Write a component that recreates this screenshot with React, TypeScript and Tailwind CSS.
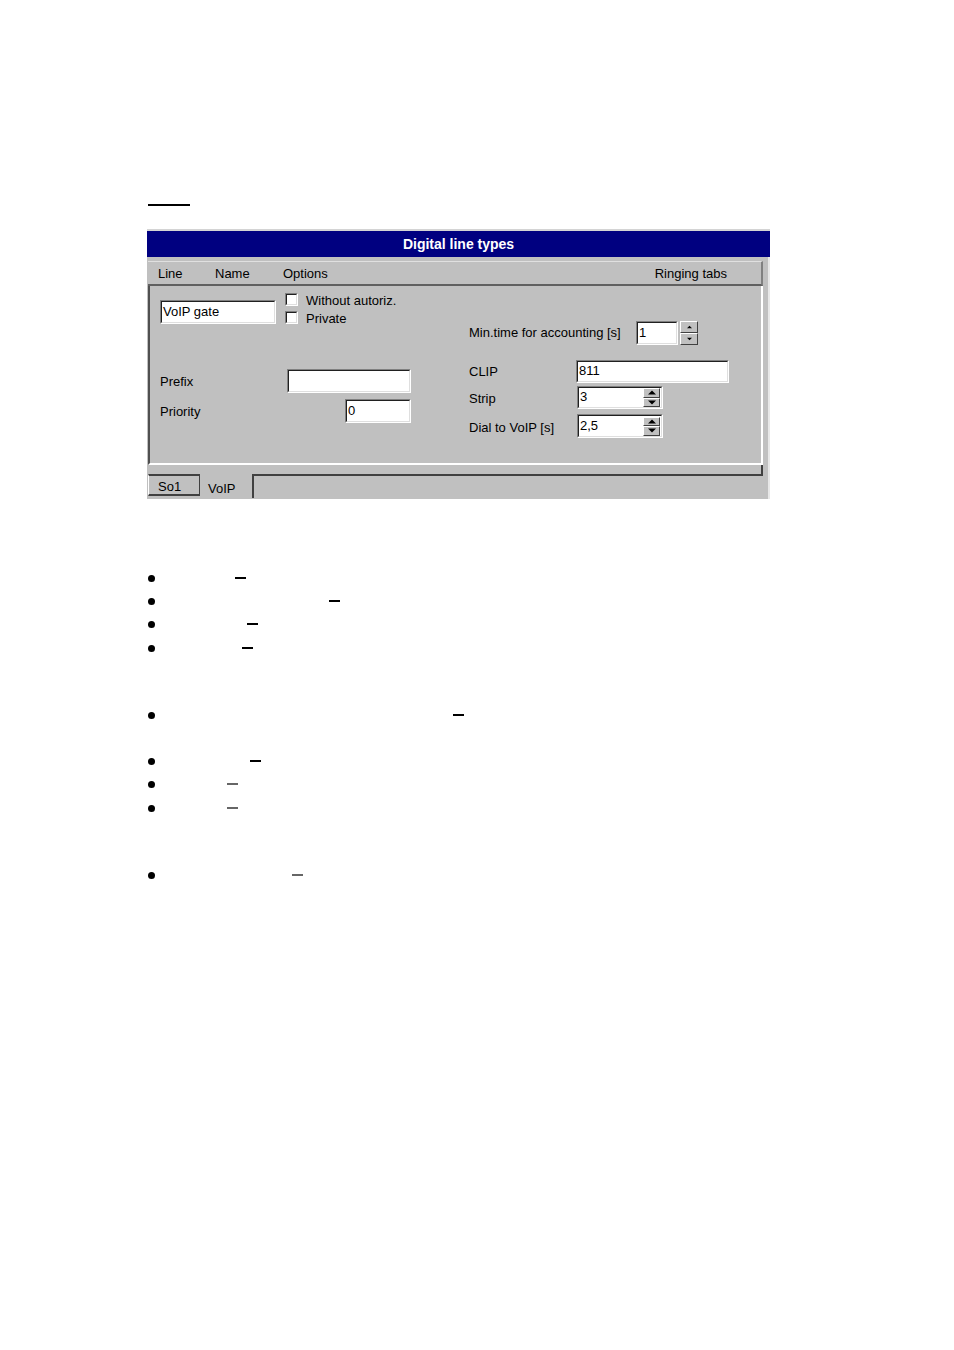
import React from "react";

const font = { fontFamily: '"Liberation Sans", Arial, sans-serif' };

// sunken white edit field, win95 style
const Field: React.FC<{ value?: string; className?: string; children?: React.ReactNode }> = ({ value, className, children }) => (
  <div className={`border-t border-l border-t-[#808080] border-l-[#808080] border-b border-r border-b-white border-r-white ${className}`}>
    <div className="flex h-full items-center border-t border-l border-t-[#202020] border-l-[#202020] border-b border-r border-b-[#dfdfdf] border-r-[#dfdfdf] bg-white pl-[1px] text-[13px] leading-none">
      <span className="relative top-[-1px] flex-1">{value}</span>
      {children}
    </div>
  </div>
);

const Arrow: React.FC<{ up?: boolean; size?: number }> = ({ up, size = 7 }) => (
  <svg width={size} height={Math.ceil(size / 2) + 1} viewBox="0 0 8 5">
    {up ? <polygon points="0,4.5 4,0.5 8,4.5" fill="#000" /> : <polygon points="0,0.5 4,4.5 8,0.5" fill="#000" />}
  </svg>
);

const SpinInside: React.FC = () => (
  <div className="mr-[1px] flex h-[19px] w-[17px] flex-col">
    <div className="flex flex-1 items-center justify-center border-t border-l border-t-white border-l-white border-b border-r border-b-[#404040] border-r-[#404040] bg-[#c0c0c0]">
      <Arrow up size={8} />
    </div>
    <div className="flex flex-1 items-center justify-center border-t border-l border-t-white border-l-white border-b border-r border-b-[#404040] border-r-[#404040] bg-[#c0c0c0]">
      <Arrow size={8} />
    </div>
  </div>
);

const Checkbox: React.FC<{ label: string }> = ({ label }) => (
  <div className="flex h-[13px] items-center">
    <div className="h-[13px] w-[13px] border-t border-l border-t-[#808080] border-l-[#808080] border-b border-r border-b-white border-r-white">
      <div className="h-full w-full border-t border-l border-t-[#202020] border-l-[#202020] border-b border-r border-b-[#dfdfdf] border-r-[#dfdfdf] bg-white" />
    </div>
    <span className="relative top-[1px] ml-[8px] text-[13px] leading-none">{label}</span>
  </div>
);

const bullets = [
  { row: "mt-[73px]", dash: "ml-[80px] bg-black" },
  { row: "mt-[11px]", dash: "ml-[174px] bg-black" },
  { row: "mt-[11px]", dash: "ml-[92px] bg-black" },
  { row: "mt-[12px]", dash: "ml-[87px] bg-black" },
  { row: "mt-[55px]", dash: "ml-[298px] bg-black" },
  { row: "mt-[34px]", dash: "ml-[95px] bg-black" },
  { row: "mt-[11px]", dash: "ml-[72px] bg-[#666]" },
  { row: "mt-[12px]", dash: "ml-[72px] bg-[#666]" },
  { row: "mt-[55px]", dash: "ml-[137px] bg-[#666]" },
];

export default function App() {
  return (
    <div className="min-h-[1350px] w-[954px] bg-white text-black" style={font}>
      <div className="h-[204px]" />
      <div className="ml-[148px] h-[2px] w-[42px] bg-black" />

      {/* DIALOG */}
      <div className="ml-[147px] mt-[23px] w-[623px]">
        <div className="h-[2px] bg-[#d4d4d4]" />
        <div className="flex h-[26px] items-center justify-center bg-[#000080] pt-[1px] text-[14px] font-bold text-white">
          Digital line types
        </div>
        <div className="h-[242px] border-r-2 border-r-[#e8e8e8] bg-[#c0c0c0] pl-[1px] pt-[4px]">
          {/* header */}
          <div className="flex h-[25px] w-[615px] items-center border-t border-t-[#e0e0e0] border-r-2 border-r-[#808080] border-b-2 border-b-[#606060] pt-[1px] text-[13px] leading-none">
            <span className="w-[67px] pl-[10px]">Line</span>
            <span className="w-[68px]">Name</span>
            <span>Options</span>
            <span className="ml-auto mr-[34px]">Ringing tabs</span>
          </div>

          {/* panel */}
          <div className="flex h-[179px] w-[615px] border-l-2 border-l-[#505050] border-r-2 border-r-white border-b-2 border-b-white">
            <div className="w-[319px] pl-[10px] pt-[7px]">
              <div className="flex items-start">
                <Field value="VoIP gate" className="mt-[7px] h-[24px] w-[116px]" />
                <div className="ml-[9px] flex flex-col gap-[5px]">
                  <Checkbox label="Without autoriz." />
                  <Checkbox label="Private" />
                </div>
              </div>
              <div className="mt-[45px] flex items-center">
                <span className="w-[127px] text-[13px] leading-none">Prefix</span>
                <Field className="h-[24px] w-[124px]" />
              </div>
              <div className="mt-[6px] flex items-center">
                <span className="w-[185px] text-[13px] leading-none">Priority</span>
                <Field value="0" className="h-[24px] w-[66px]" />
              </div>
            </div>

            <div className="flex-1 pt-[35px]">
              <div className="flex items-center">
                <span className="relative top-[-1px] w-[167px] text-[13px] leading-none">Min.time for accounting [s]</span>
                <Field value="1" className="h-[24px] w-[42px]" />
                <div className="ml-[2px] flex h-[24px] w-[18px] flex-col">
                  <div className="flex flex-1 items-center justify-center border-t border-l border-t-white border-l-white border-b border-r border-b-[#404040] border-r-[#404040]">
                    <Arrow up size={5} />
                  </div>
                  <div className="flex flex-1 items-center justify-center border-t border-l border-t-white border-l-white border-b border-r border-b-[#404040] border-r-[#404040]">
                    <Arrow size={5} />
                  </div>
                </div>
              </div>
              <div className="mt-[15px] flex items-center">
                <span className="w-[107px] text-[13px] leading-none">CLIP</span>
                <Field value="811" className="h-[23px] w-[153px]" />
              </div>
              <div className="mt-[3px] flex items-center">
                <span className="relative top-[1px] w-[108px] text-[13px] leading-none">Strip</span>
                <Field value="3" className="h-[23px] w-[86px]">
                  <SpinInside />
                </Field>
              </div>
              <div className="mt-[5px] flex items-center">
                <span className="relative top-[1px] w-[108px] text-[13px] leading-none">Dial to VoIP [s]</span>
                <Field value="2,5" className="h-[24px] w-[86px]">
                  <SpinInside />
                </Field>
              </div>
            </div>
          </div>

          {/* strip under panel */}
          <div className="h-[9px] w-[615px] border-r-2 border-r-[#404040]" />

          {/* tabs */}
          <div className="flex w-[615px] items-start">
            <div className="flex h-[22px] w-[52px] items-center border-t-2 border-t-[#404040] border-l border-l-white border-r border-r-[#404040] border-b-2 border-b-[#404040] pl-[9px] pt-[2px] text-[13px] leading-none">
              So1
            </div>
            <div className="flex h-[24px] w-[54px] items-center border-r-2 border-r-[#404040] pl-[8px] pt-[5px] text-[13px] leading-none">
              VoIP
            </div>
            <div className="h-[2px] flex-1 bg-[#404040]" />
          </div>
        </div>
      </div>

      {/* bullet list */}
      <div>
        {bullets.map((b, i) => (
          <div key={i} className={`flex h-[12px] items-center ${b.row}`}>
            <div className="ml-[148px] h-[7px] w-[7px] rounded-full bg-black" />
            <div className={`h-[2px] w-[11px] ${b.dash}`} />
          </div>
        ))}
      </div>
    </div>
  );
}
